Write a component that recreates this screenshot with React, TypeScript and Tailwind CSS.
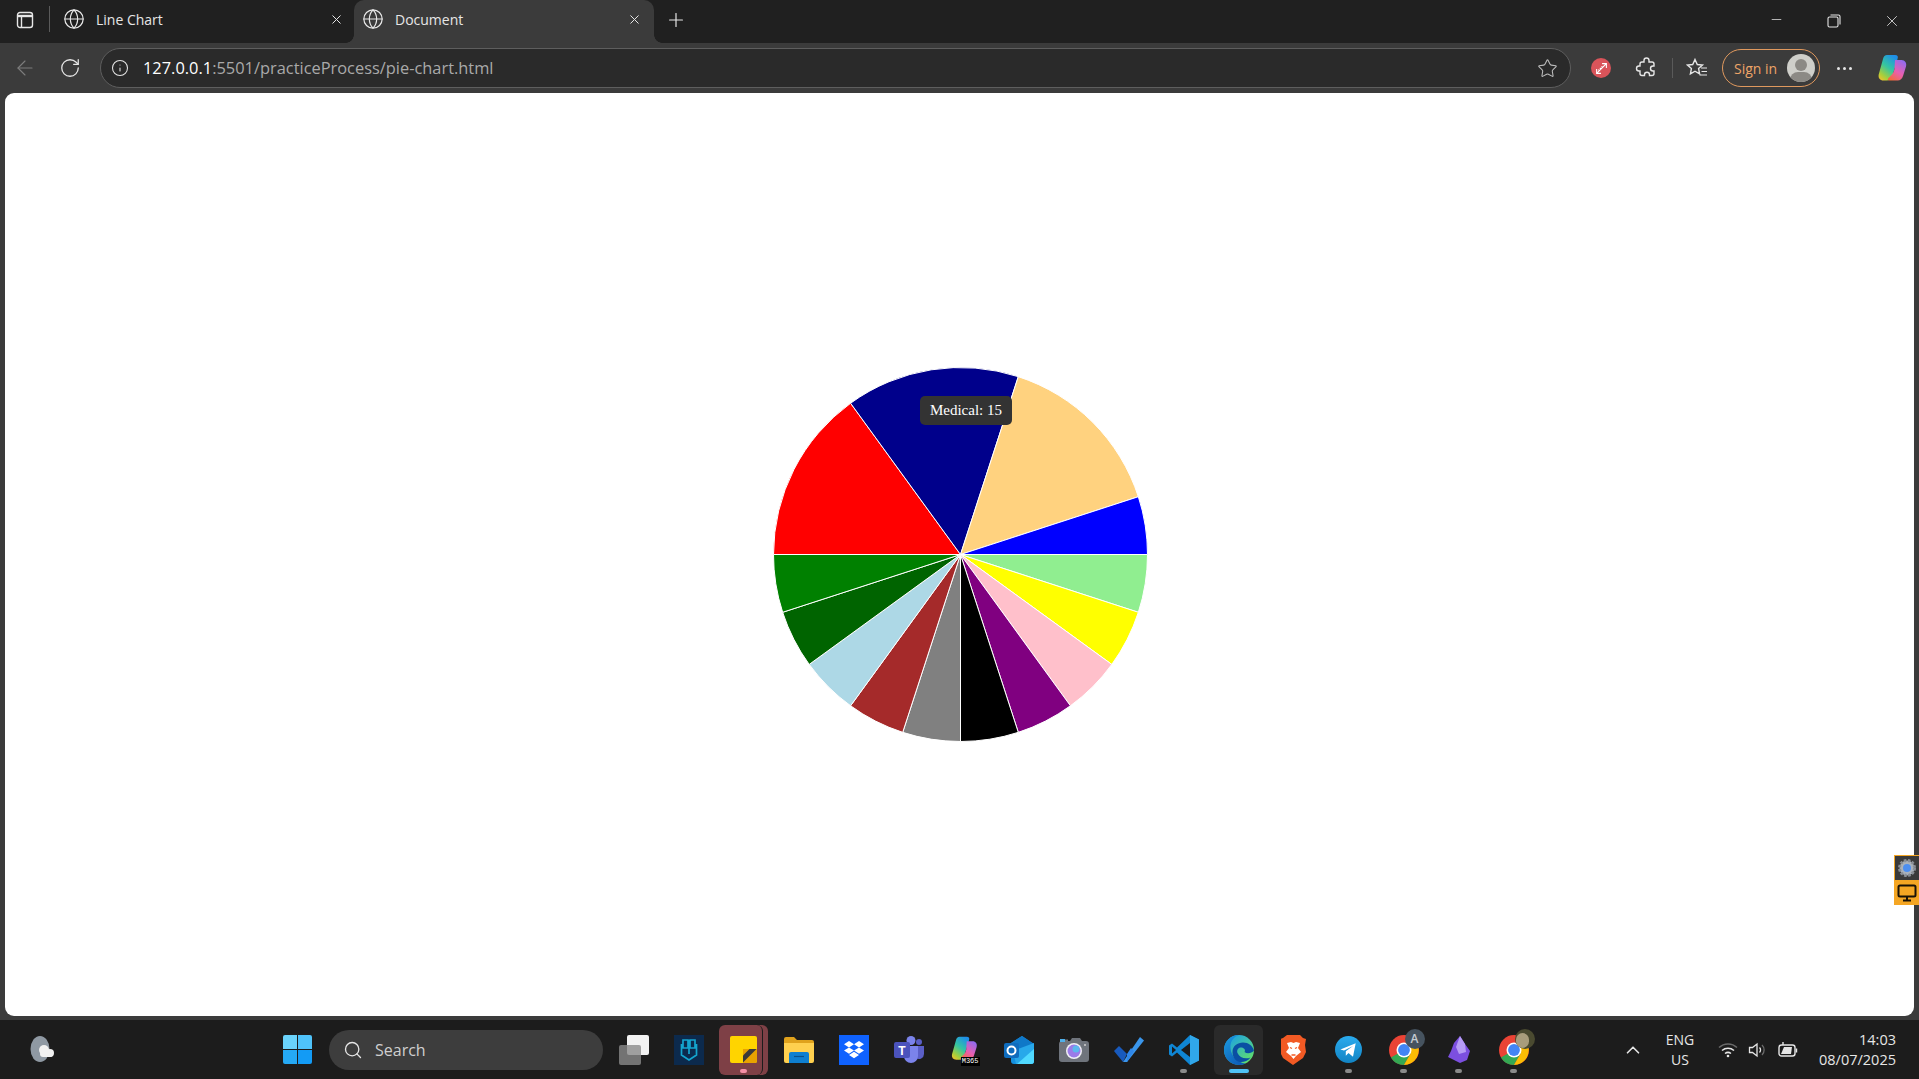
import React from "react";
import { ArrowLeft, RotateCw, Info, Star, X, Plus, Minus, Search, ChevronUp, Globe } from "lucide-react";

const CX = 187.5;
const R = 187;
const slices: [string, number][] = [
  ["#90ee90", 18],["#ffff00", 18],["#ffc0cb", 18],["#800080", 18],["#000000", 18],
  ["#808080", 18],["#a52a2a", 18],["#add8e6", 18],["#006400", 18],["#008000", 18],
  ["#ff0000", 54],["#00008b", 54],["#ffd27f", 54],["#0000ff", 18],
];

function Pie() {
  let a = 0;
  return (
    <svg width="375" height="375" viewBox="0 0 375 375" className="block">
      {slices.map(([c, d], i) => {
        const s = (a * Math.PI) / 180;
        a += d;
        const e = (a * Math.PI) / 180;
        const p = `M${CX} ${CX}L${CX + R * Math.cos(s)} ${CX + R * Math.sin(s)}A${R} ${R} 0 0 1 ${CX + R * Math.cos(e)} ${CX + R * Math.sin(e)}Z`;
        return <path key={i} d={p} fill={c} stroke="#fff" strokeWidth="1" />;
      })}
    </svg>
  );
}

function Dot({ color = "bg-[#8a8a8a]", w = "w-[7px]" }: { color?: string; w?: string }) {
  return <div className={`${w} h-[4px] rounded-full ${color}`} />;
}

function TaskIcon({ children, dot, box }: { children: React.ReactNode; dot?: React.ReactNode; box?: string }) {
  return (
    <div className="relative w-[55px] h-[50px] flex items-center justify-center shrink-0">
      {box && <div className={`absolute top-0 bottom-0 left-[3px] right-[3px] rounded-[6px] ${box}`} />}
      <div className="relative flex items-center justify-center">{children}</div>
      {dot && <div className="absolute bottom-[2px] left-0 right-0 flex justify-center">{dot}</div>}
    </div>
  );
}

function ChromeIcon() {
  return (
    <svg width="30" height="30" viewBox="0 0 32 32">
      <circle cx="16" cy="16" r="16" fill="#ea4335" />
      <path d="M16 16L2.100 24A16 16 0 0 0 16 32L30 8Z" fill="#34a853" />
      <path d="M16 8.500h13.900A16 16 0 0 1 16 32l7-12Z" fill="#fbbc04" />
      <circle cx="16" cy="16" r="8" fill="#fff" />
      <circle cx="16" cy="16" r="6.300" fill="#4285f4" />
    </svg>
  );
}

function Copilot({ a, b }: { a: string; b: string }) {
  return (
    <>
      <defs>
        <linearGradient id={a} x1="0.7" y1="0" x2="0.1" y2="1"><stop offset="0" stopColor="#1f8fe8" /><stop offset="0.45" stopColor="#35c6a0" /><stop offset="0.8" stopColor="#a9cf3a" /><stop offset="1" stopColor="#f2c12e" /></linearGradient>
        <linearGradient id={b} x1="0.8" y1="0" x2="0.2" y2="1"><stop offset="0" stopColor="#8f6bf0" /><stop offset="0.55" stopColor="#e85fb0" /><stop offset="1" stopColor="#f26b3a" /></linearGradient>
      </defs>
      <path d="M10 2h8c2.500 0 3.500 1.500 2.500 4L15 24c-.8 2.500-2.500 3.500-5 3.500H6.500c-3.500 0-5.500-2.500-4.800-6L6 6c.6-2.500 2-4 4-4Z" fill={`url(#${a})`} />
      <path d="M18 7h6.500c3.500 0 5.500 3 4.500 6.500l-2.800 9c-1 3.500-3 5-5.500 5h-8.200c-2 0-2.200-1-1-2.500l3-3c2-2.200 2.500-4 3-6Z" fill={`url(#${b})`} />
    </>
  );
}

export default function App() {
  return (
    <div className="w-[1919px] h-[1079px] flex flex-col overflow-hidden bg-[#202020] font-['Open_Sans','Noto_Sans',sans-serif] relative">
      {/* Tab strip */}
      <div className="h-[43px] shrink-0 flex items-stretch bg-[#202020]">
        <div className="w-[49px] flex items-center justify-center pl-[1px] pb-[3px]">
          <svg width="18" height="18" viewBox="0 0 18 18" fill="none" stroke="#e6e6e6" strokeWidth="1.400">
            <rect x="1.500" y="1.500" width="15" height="15" rx="2.500" />
            <path d="M1.500 5h15" strokeWidth="2.400" />
            <path d="M5.500 5v11" />
          </svg>
        </div>
        <div className="w-[1px] h-[26px] self-center bg-[#5a5a5a] mt-[-5px] mr-[6px]" />
        <div className="w-[298px] flex items-center pb-[5px] pl-[7px] pr-[12px]">
          <Globe size={22} strokeWidth={1.300} className="text-[#e8e8e8] shrink-0" />
          <span className="ml-[11px] text-[14px] text-[#e6e6e6] flex-1">Line Chart</span>
          <X size={15} strokeWidth={1.600} className="text-[#e6e6e6] mr-[-2px]" />
        </div>
        <div className="relative w-[300px] flex items-center pb-[5px] pl-[8px] pr-[12px] bg-[#3b3b3b] rounded-t-[10px]">
          <div className="absolute left-[-8px] bottom-0 w-[8px] h-[8px] bg-[radial-gradient(circle_at_0_0,#202020_7.500px,#3b3b3b_8px)]" />
          <div className="absolute right-[-8px] bottom-0 w-[8px] h-[8px] bg-[radial-gradient(circle_at_100%_0,#202020_7.500px,#3b3b3b_8px)]" />
          <Globe size={22} strokeWidth={1.300} className="text-[#e8e8e8] shrink-0" />
          <span className="ml-[11px] text-[14px] text-[#e6e6e6] flex-1">Document</span>
          <X size={15} strokeWidth={1.600} className="text-[#e6e6e6]" />
        </div>
        <div className="w-[44px] flex items-center justify-center pb-[4px]">
          <Plus size={22} strokeWidth={1.300} className="text-[#e6e6e6]" />
        </div>
        <div className="flex-1" />
        <div className="flex items-center text-[#e6e6e6] pr-[18px] pb-[2px]">
          <Minus size={15} strokeWidth={1.200} className="mr-[43px] mb-[3px]" />
          <svg width="14" height="14" viewBox="0 0 14 14" fill="none" stroke="#e6e6e6" strokeWidth="1.100" className="mr-[42px]">
            <rect x="1" y="3" width="10" height="10" rx="1.500" />
            <path d="M3.500 1h8a1.500 1.500 0 0 1 1.500 1.500v8" />
          </svg>
          <X size={18} strokeWidth={1.100} />
        </div>
      </div>

      {/* Toolbar */}
      <div className="h-[50px] shrink-0 bg-[#3b3b3b] flex items-center pl-[13px] pr-[10px]">
        <ArrowLeft size={24} strokeWidth={1.100} className="text-[#7d7d7d]" />
        <RotateCw size={22} strokeWidth={1.400} className="text-[#e6e6e6] ml-[22px]" />
        <div className="ml-[19px] w-[1471px] h-[40px] rounded-full bg-[#2a2a2a] border border-[#5e5e5e] flex items-center pl-[10px] pr-[12px]">
          <Info size={18} strokeWidth={1.400} className="text-[#e6e6e6]" />
          <span className="ml-[14px] text-[16.400px] whitespace-nowrap">
            <span className="text-white">127.0.0.1</span>
            <span className="text-[#a9a9a9]">:5501/practiceProcess/pie-chart.html</span>
          </span>
          <div className="flex-1" />
          <Star size={21} strokeWidth={1.200} className="text-[#bdbdbd]" />
        </div>
        <div className="ml-[20px] w-[20px] h-[20px] rounded-full bg-[#d9545a] flex items-center justify-center">
          <svg width="13" height="13" viewBox="0 0 12 12" fill="none" stroke="#fff" strokeWidth="1"><path d="M1.500 10.500L10.500 1.500M6.500 1.500h4v4M1.500 6.500v4h4M4 8l-1-1M5.500 6.500l-1-1M7 5L6 4" /></svg>
        </div>
        <svg width="22" height="22" viewBox="0 0 22 22" fill="none" stroke="#e6e6e6" strokeWidth="1.400" className="ml-[24px]">
          <path d="M9 3.500a2.500 2.500 0 0 1 5 0V5h3a2 2 0 0 1 2 2v2h-1a2.500 2.500 0 0 0 0 5h1v2.500a2 2 0 0 1-2 2h-2.500v-.8a2.500 2.500 0 0 0-5 0v.8H7a2 2 0 0 1-2-2V14H4a2.500 2.500 0 0 1 0-5h1V7a2 2 0 0 1 2-2h2Z" />
        </svg>
        <div className="w-[1px] h-[20px] bg-[#5a5a5a] ml-[15px]" />
        <svg width="22" height="22" viewBox="0 0 22 22" fill="none" stroke="#e6e6e6" strokeWidth="1.400" className="ml-[13px]">
          <path d="M9 2.500l2.300 5 5.200.6-3.900 3.500 1 5.300L9 14.200l-4.600 2.700 1-5.300L1.500 8.100l5.200-.6Z" />
          <path d="M15 11h6M15.500 14.500h5.500M13.500 18h7.500" strokeWidth="1.200" />
        </svg>
        <div className="ml-[14px] w-[98px] h-[38px] rounded-full border-[1.500px] border-[#e0995e] flex items-center pl-[11px] pr-[4px]">
          <span className="text-[14px] text-[#eda468] flex-1">Sign in</span>
          <div className="w-[28px] h-[28px] rounded-full bg-[#cfcfca] overflow-hidden relative shrink-0">
            <div className="absolute left-[8px] top-[5px] w-[12px] h-[12px] rounded-full bg-[#8c8a85]" />
            <div className="absolute left-[3px] top-[18px] w-[22px] h-[16px] rounded-full bg-[#8c8a85]" />
          </div>
        </div>
        <div className="ml-[17px] flex gap-[3px]">
          <div className="w-[3px] h-[3px] rounded-full bg-[#e6e6e6]" />
          <div className="w-[3px] h-[3px] rounded-full bg-[#e6e6e6]" />
          <div className="w-[3px] h-[3px] rounded-full bg-[#e6e6e6]" />
        </div>
        <svg width="30" height="30" viewBox="0 0 30 30" className="ml-[25px]"><Copilot a="cpA" b="cpB" /></svg>
      </div>

      {/* Page */}
      <div className="h-[927px] shrink-0 bg-[#3b3b3b] px-[5px] pb-[4px] relative">
        <div className="h-[923px] bg-white rounded-[9px] flex items-center justify-center overflow-hidden font-['Liberation_Serif',serif]">
          <div className="relative w-[375px] h-[375px] ml-[2px]">
            <Pie />
            <div className="absolute left-[147px] top-[29px] h-[29px] w-[92px] justify-center rounded-[5px] bg-[#333333] text-white text-[15px] flex items-center">Medical: 15</div>
          </div>
        </div>
        <div className="absolute right-0 top-[762px] w-[25px] flex flex-col bg-[#f5a623]">
          <div className="h-[24px] mt-[1px] ml-[1px] bg-[#3a3a3a] flex items-center justify-center">
            <svg width="20" height="20" viewBox="0 0 20 20"><circle cx="10" cy="10" r="7.500" fill="#aab2bb" stroke="#8a8f96" strokeDasharray="2.500 1.500" strokeWidth="3" /><circle cx="10" cy="10" r="4" fill="#4d8ff0" /></svg>
          </div>
          <div className="h-[25px] flex items-center justify-center">
            <svg width="20" height="18" viewBox="0 0 20 18" fill="none" stroke="#1a1206" strokeWidth="2"><rect x="1.500" y="1.500" width="17" height="11" rx="1.500" /><path d="M10 13v3M6 16.500h8" /></svg>
          </div>
        </div>
      </div>

      {/* Taskbar */}
      <div className="flex-1 bg-[#1c1c1c] flex items-center relative text-[#e6e6e6]">
        <div className="absolute left-[27px] top-[14px]">
          <svg width="30" height="30" viewBox="0 0 30 30"><ellipse cx="13" cy="15" rx="9.500" ry="13" fill="#8f99a3" /><circle cx="17" cy="16" r="5" fill="#f1f1f1" /><circle cx="23" cy="19" r="4" fill="#f1f1f1" /><rect x="13" y="17" width="13" height="6" rx="3" fill="#f1f1f1" /></svg>
        </div>
        <div className="ml-[283px] flex items-center">
          <div className="grid grid-cols-2 gap-[1px] w-[29px] h-[29px] mt-[-1px]">
            <div className="bg-[#6ad3fb] rounded-tl-[2px]" /><div className="bg-[#4fc3fa] rounded-tr-[2px]" />
            <div className="bg-[#25a9f5] rounded-bl-[2px]" /><div className="bg-[#139bf5] rounded-br-[2px]" />
          </div>
          <div className="ml-[17px] w-[274px] h-[40px] rounded-full bg-[#3d3d3d] flex items-center pl-[14px]">
            <Search size={20} strokeWidth={1.600} className="text-[#e6e6e6]" />
            <span className="ml-[12px] text-[16px] text-[#cfcfcf]">Search</span>
          </div>
          <div className="ml-[3px] flex items-center">
            <TaskIcon>
              <div className="relative w-[30px] h-[30px]">
                <div className="absolute right-0 top-0 w-[22px] h-[20px] bg-[#f2f2f2] rounded-[2px]" />
                <div className="absolute left-0 bottom-0 w-[22px] h-[20px] bg-[#8a8a8a]/80 rounded-[2px]" />
              </div>
            </TaskIcon>
            <TaskIcon>
              <div className="w-[30px] h-[30px] bg-[#0c2a4d] flex items-center justify-center">
                <svg width="18" height="24" viewBox="0 0 18 24" fill="none" stroke="#14a5cf" strokeWidth="1.700"><path d="M3 2h5v8H3ZM10 2h5v8h-5ZM1.500 6v11L9 22l7.500-5V6M9 2v14" /></svg>
              </div>
            </TaskIcon>
            <div className="relative">
              <div className="absolute left-[38px] top-0 bottom-0 w-[14px] rounded-[6px] bg-[#7e4046]" />
              <TaskIcon box="bg-[#7e4046] border-r border-[#1c1c1c] !right-[8px]" dot={<Dot color="bg-[#f48fa6]" />}>
                <div className="w-[27px] h-[27px] mt-[-1px] bg-[#ffd400] rounded-[2px] relative overflow-hidden">
                  <div className="absolute right-0 bottom-0 w-[14px] h-[14px] bg-[#e8a200]" />
                  <div className="absolute right-0 bottom-0 w-[14px] h-[14px] bg-[#3a3a3a] [clip-path:polygon(100%_0,0_100%,0_50%,50%_0)] rounded-tl-[2px]" />
                </div>
              </TaskIcon>
            </div>
            <TaskIcon>
              <svg width="30" height="27" viewBox="0 0 30 27"><path d="M0 3a2 2 0 0 1 2-2h8l3 3h15a2 2 0 0 1 2 2v4H0Z" fill="#e0a21c" /><path d="M0 7h30v18a2 2 0 0 1-2 2H2a2 2 0 0 1-2-2Z" fill="#ffd04f" /><path d="M5 18a2 2 0 0 1 2-2h16a2 2 0 0 1 2 2v9H5Z" fill="#0e7fd0" /><path d="M10 20.500h10" stroke="#0a4f88" strokeWidth="1.200" /></svg>
            </TaskIcon>
            <TaskIcon>
              <div className="w-[30px] h-[30px] bg-[#0f62fe] flex items-center justify-center">
                <svg width="20" height="18" viewBox="0 0 20 18" fill="#fff"><path d="M5 0l5 3.200-5 3.200L0 3.200ZM15 0l5 3.200-5 3.200-5-3.200ZM0 9.600l5-3.200 5 3.200-5 3.200ZM15 6.400l5 3.200-5 3.200-5-3.200ZM5 14l5-3.200 5 3.200-5 3.200Z" /></svg>
              </div>
            </TaskIcon>
            <TaskIcon>
              <svg width="30" height="27" viewBox="0 0 30 27"><circle cx="17" cy="4.500" r="4.500" fill="#7b83eb" /><circle cx="25" cy="6" r="3" fill="#5b5fc7" /><path d="M22 10h8v8a5 5 0 0 1-8 4Z" fill="#5b5fc7" /><path d="M10 10h14v10a7 7 0 0 1-14 0Z" fill="#7b83eb" /><rect x="0" y="6" width="16" height="16" rx="2" fill="#4b53bc" /><text x="8" y="18.500" textAnchor="middle" fontSize="12" fontWeight="700" fill="#fff" fontFamily="Liberation Sans">T</text></svg>
            </TaskIcon>
            <TaskIcon>
              <div className="relative w-[30px] h-[30px]">
                <svg width="30" height="27" viewBox="0 0 30 30"><Copilot a="mA" b="mB" /></svg>
                <span className="absolute right-[-1px] bottom-[-1px] bg-black text-white text-[7px] leading-[9px] px-[1px] font-['Liberation_Mono',monospace]">M365</span>
              </div>
            </TaskIcon>
            <TaskIcon>
              <svg width="30" height="30" viewBox="0 0 30 30"><path d="M7 8l11-7 12 8v17a3 3 0 0 1-3 3H10a3 3 0 0 1-3-3Z" fill="#1490df" /><path d="M7 8l11-7 12 8-11 7Z" fill="#0f78c8" /><path d="M9 16l21-8v18a3 3 0 0 1-3 3H12Z" fill="#28a8ea" /><path d="M30 14v12a3 3 0 0 1-3 3H13Z" fill="#50d9ff" /><rect x="0" y="8" width="15" height="15" rx="2" fill="#0f6cbd" /><circle cx="7.500" cy="15.500" r="4" fill="none" stroke="#fff" strokeWidth="2" /></svg>
            </TaskIcon>
            <TaskIcon>
              <svg width="30" height="24" viewBox="0 0 30 24"><path d="M3 3h2V1.500h4V3h2l2-3h8l2 3h4a3 3 0 0 1 3 3v15a3 3 0 0 1-3 3H3a3 3 0 0 1-3-3V6a3 3 0 0 1 3-3Z" fill="#6f747c" /><rect x="1" y="1" width="5" height="3" fill="#4fb0ea" /><circle cx="15" cy="13" r="8" fill="#f0f0f5" /><circle cx="15" cy="13" r="6.500" fill="#9b7be8" /><circle cx="17" cy="11" r="3.500" fill="#5cb8ee" /><circle cx="26" cy="7" r="1" fill="#cfcfcf" /></svg>
            </TaskIcon>
            <TaskIcon>
              <svg width="30" height="25" viewBox="0 0 30 25"><path d="M0 14l5-5 8 8-4 8Z" fill="#185abd" /><path d="M9 25L26 0l4 3.500L13 25Z" fill="#3a96ec" /><path d="M13 17l4-6 3 3-7 11Z" fill="#2f86e8" /></svg>
            </TaskIcon>
            <TaskIcon dot={<Dot />}>
              <svg width="30" height="30" viewBox="0 0 30 30"><path d="M21 0l9 4.500v21L21 30 8 17.500 3 21.500 0 19.500v-9l3-2 5 4Z" fill="#0f86d4" /><path d="M21 0l9 4.500v21L21 30Z" fill="#30a7ea" /><path d="M21 8v14l-9-7Z" fill="#1c1c1c" /><path d="M3 11.500v7l4-3.500Z" fill="#1c1c1c" /></svg>
            </TaskIcon>
            <TaskIcon box="bg-[#2a2a2a]" dot={<Dot color="bg-[#4fc3f7]" w="w-[20px]" />}>
              <svg width="30" height="30" viewBox="0 0 30 30">
                <defs>
                  <linearGradient id="eg" x1="0.3" y1="0" x2="1" y2="0.8"><stop offset="0" stopColor="#1fa3e0" /><stop offset="1" stopColor="#62e06a" /></linearGradient>
                  <linearGradient id="eb" x1="0" y1="0" x2="0.6" y2="1"><stop offset="0" stopColor="#1b9de2" /><stop offset="1" stopColor="#0e5fb8" /></linearGradient>
                </defs>
                <circle cx="15" cy="15" r="15" fill="url(#eg)" />
                <path d="M0 15C0 6 7 0 15 0 9 2 6 7 6.500 13c.5 8 7 14.500 15 15.500-2 1-4.500 1.500-6.500 1.500C6 30 0 23 0 15Z" fill="url(#eb)" />
                <path d="M8.500 17c0-6 5-9.500 10.500-9.500 5.500 0 9.500 3 11 8-2.500 3-7 3.500-9.500 1.500 1.500-2-.5-4.500-3.500-4.500-3 0-4.500 2.500-3.500 5.500 2 5 8 6.500 13 4.500-3 4-7.500 5-11 4.500-4-1-7-5-7-10Z" fill="#0a4fa3" />
              </svg>
            </TaskIcon>
            <TaskIcon>
              <svg width="25" height="30" viewBox="0 0 25 30"><path d="M6 0h13l3 3 3 1-1 6 1 7-3 6-10 7-10-7-3-6 1-7-1-6 3-1Z" fill="#f25a24" /><path d="M6 8l4-1 2.500 1L15 7l4 1-2 5 3 4-5 4-2.500 3L10 21l-5-4 3-4Z" fill="#fff" /><path d="M9 12.500l2 1M16 12.500l-2 1M10.500 20h4" stroke="#f25a24" strokeWidth="1.300" /></svg>
            </TaskIcon>
            <TaskIcon dot={<Dot />}>
              <svg width="27" height="27" viewBox="0 0 30 30"><defs><linearGradient id="tg" x1="0" y1="0" x2="0" y2="1"><stop offset="0" stopColor="#2aabee" /><stop offset="1" stopColor="#1284c4" /></linearGradient></defs><circle cx="15" cy="15" r="15" fill="url(#tg)" /><path d="M6 15l17-7-3 15-5-4-3 3v-5l8-6-10 5Z" fill="#fff" /></svg>
            </TaskIcon>
            <TaskIcon dot={<Dot />}>
              <div className="relative w-[30px] h-[30px]">
                <ChromeIcon />
                <div className="absolute left-[16px] top-[-6px] w-[20px] h-[20px] rounded-full bg-[#46535f] text-[#c5ccd2] text-[12px] font-semibold flex items-center justify-center">A</div>
              </div>
            </TaskIcon>
            <TaskIcon dot={<Dot />}>
              <svg width="22" height="27" viewBox="0 0 22 27"><path d="M12 0l5 8 5 7-3 9-7 3-6-3-6-3 3-6 3-8Z" fill="#7c4fe0" /><path d="M12 0l5 8 1 8-7 2-3-7Z" fill="#b69cf5" /></svg>
            </TaskIcon>
            <TaskIcon dot={<Dot />}>
              <div className="relative w-[30px] h-[30px]">
                <ChromeIcon />
                <div className="absolute left-[16px] top-[-6px] w-[20px] h-[20px] rounded-full bg-[#4a4a30] overflow-hidden">
                  <div className="w-[13px] h-[15px] rounded-full bg-[#a89c7c] ml-[1px] mt-[4px]" />
                </div>
              </div>
            </TaskIcon>
          </div>
        </div>
        {/* Tray */}
        <div className="absolute right-[23px] top-0 bottom-0 flex items-center">
          <ChevronUp size={22} strokeWidth={1.800} className="text-[#e6e6e6]" />
          <div className="ml-[21px] text-[14px] leading-[20px] text-center w-[30px] flex flex-col items-center"><span>ENG</span><span>US</span></div>
          <svg width="20" height="18" viewBox="0 0 20 18" fill="none" stroke="#e6e6e6" strokeWidth="1.500" className="ml-[23px]">
            <path d="M1 6.500a13 13 0 0 1 18 0" stroke="#6a6a6a" />
            <path d="M4 9.500a9 9 0 0 1 12 0M7 12.500a5 5 0 0 1 6 0" />
            <circle cx="10" cy="15" r="1.300" fill="#e6e6e6" stroke="none" />
          </svg>
          <svg width="20" height="18" viewBox="0 0 20 18" fill="none" stroke="#e6e6e6" strokeWidth="1.300" className="ml-[10px]">
            <path d="M1.500 6.500h3L9 3v12l-4.500-3.500h-3Z" />
            <path d="M11.500 6.500a3.500 3.500 0 0 1 0 5" />
            <path d="M14 4a7 7 0 0 1 0 10" stroke="#6a6a6a" />
          </svg>
          <svg width="20" height="18" viewBox="0 0 20 18" fill="none" stroke="#e6e6e6" strokeWidth="1.400" className="ml-[10px]">
            <rect x="1" y="4" width="16" height="11" rx="2.500" />
            <path d="M18.500 7.500v4" />
            <path d="M3 13l3-7h8l-1 7Z" fill="#e6e6e6" stroke="none" />
            <path d="M5 1v3" />
          </svg>
          <div className="ml-[14px] w-[84px] text-[14.500px] leading-[20px] text-right"><div>14:03</div><div className="whitespace-nowrap">08/07/2025</div></div>
        </div>
      </div>
    </div>
  );
}
